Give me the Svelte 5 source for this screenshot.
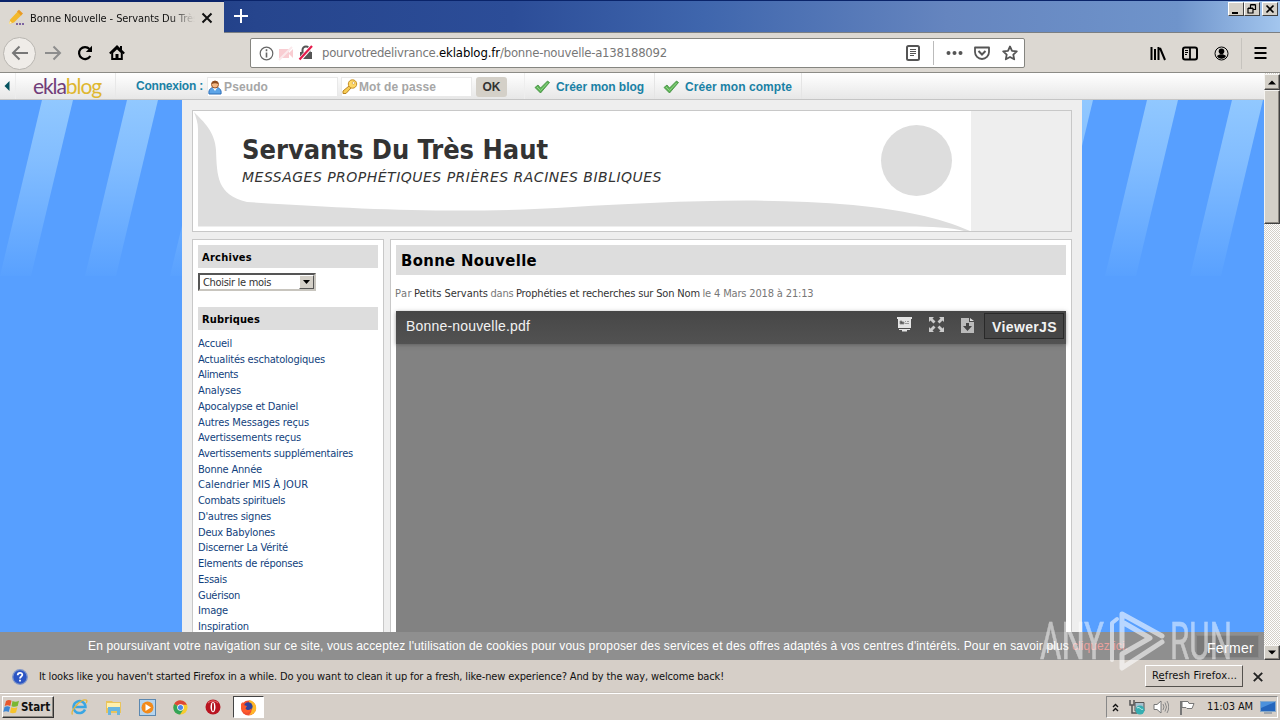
<script>
  // Spreads the letters of an inline element so that it fills the given width.
  function fit(node, width) {
    const natural = node.getBoundingClientRect().width;
    node.style.letterSpacing = `${(width - natural) / [...node.textContent].length}px`;
  }

  const rubriques = [
    ['Accueil', 34], ['Actualités eschatologiques', 127], ['Aliments', 40], ['Analyses', 43],
    ['Apocalypse et Daniel', 100], ['Autres Messages reçus', 111], ['Avertissements reçus', 103],
    ['Avertissements supplémentaires', 155], ['Bonne Année', 64], ['Calendrier MIS À JOUR', 110],
    ['Combats spirituels', 87], ["D'autres signes", 73], ['Deux Babylones', 77],
    ['Discerner La Vérité', 90], ['Elements de réponses', 105], ['Essais', 29],
    ['Guérison', 42], ['Image', 30], ['Inspiration', 51]
  ];
  const leftStripes = [42, 127, 212];
  const rightStripes = [1062, 1147, 1232];
  const stripe = (x) => `${x},0 ${x + 31},0 ${x - 11},176 ${x - 42},176`;
</script>

{#snippet check()}
  <svg class="check" width="16" height="14" viewBox="0 0 16 14"><path d="M1 7.5 4 5l2.500 3L13.500 1 15.500 2.500 6.500 13z" fill="#5fb457" stroke="#3d8c3c" stroke-width=".8" /><path d="M3 7l3.500 3.500L13.500 3" fill="none" stroke="#8fd587" /></svg>
{/snippet}

<div class="screen">
  <header class="tabs">
    <div class="tab">
      <svg width="17" height="17" viewBox="0 0 17 17"><path d="M1 15 2.200 10.500 10 2.200 13.800 5.800 6 13.500z" fill="#f3b92c" /><path d="M9 2.500 11 .8 15 4.500 13 6.500z" fill="#e89a25" /><path d="M1 15l1-3 2 2z" fill="#fff1b8" /><path d="M8 15h2m1 0h2m1 0h2" stroke="#5d3e91" stroke-width="1.700" /></svg>
      <div class="tabtitle"><span use:fit={168}>Bonne Nouvelle - Servants Du Très</span></div>
      <svg width="12" height="12" viewBox="0 0 12 12"><path d="M1.500 1.500l9 9m0-9l-9 9" stroke="#111" stroke-width="2" /></svg>
    </div>
    <svg class="plus" width="16" height="16" viewBox="0 0 16 16"><path d="M8 1v14M1 8h14" stroke="#fff" stroke-width="2" /></svg>
    <div class="winbtns">
      <b><svg width="14" height="12" viewBox="0 0 14 12"><path d="M3 10h6" stroke="#000" stroke-width="2" /></svg></b>
      <b><svg width="14" height="12" viewBox="0 0 14 12"><path d="M5.500 4.500V2h5v4.500H8M3 5.500h5V10H3zM3 5h5M5.500 1.500h5" fill="none" stroke="#000" stroke-width="1.200" /></svg></b>
      <b class="close"><svg width="14" height="12" viewBox="0 0 14 12"><path d="M3.500 2.500l7 7m0-7l-7 7" stroke="#000" stroke-width="1.700" /></svg></b>
    </div>
  </header>

  <div class="toolbar">
    <div class="back"><svg width="18" height="16" viewBox="0 0 18 16"><path d="M17 8H2m6.500-6.500L2 8l6.500 6.500" fill="none" stroke="#777" stroke-width="2" /></svg></div>
    <svg class="fwd" width="17" height="16" viewBox="0 0 17 16"><path d="M0 8h15M8.500 1.500L15 8l-6.500 6.500" fill="none" stroke="#8d8d8d" stroke-width="2" /></svg>
    <svg class="reload" width="16" height="16" viewBox="0 0 16 16"><path d="M13.300 11A6 6 0 1 1 12.500 4" fill="none" stroke="#000" stroke-width="2.200" /><path d="M15 .8V7H8.800z" /></svg>
    <svg class="home" width="16" height="16" viewBox="0 0 16 16"><path d="M.8 8.500L8 1.500l7.200 7" fill="none" stroke="#000" stroke-width="2" /><path d="M3.200 7.500V14h9.600V7.500L8 3z" fill="none" stroke="#000" stroke-width="2" /><path d="M6.500 9h3v5.500h-3zM11 1h2v4h-2z" /></svg>
    <div class="url">
      <svg width="15" height="15" viewBox="0 0 15 15"><circle cx="7.500" cy="7.500" r="6.300" fill="none" stroke="#666" stroke-width="1.200" /><path d="M7.500 3.300v1.900M7.500 6.500v5" stroke="#666" stroke-width="1.600" /></svg>
      <svg class="blocked" width="16" height="15" viewBox="0 0 16 15"><path d="M1 3h10v9H1zM11 7l4-4v9l-4-4z" fill="#f9cdd2" /><path d="M1 14L14 1" stroke="#fbe9eb" stroke-width="2" /></svg>
      <svg class="lock" width="16" height="16" viewBox="0 0 16 16"><path d="M2 7h12v7H2z" fill="#555" /><path d="M4.500 7V5a3.500 3.500 0 0 1 7 0v2" fill="none" stroke="#555" stroke-width="2" /><path d="M2 14.500L14 1" stroke="#fff" stroke-width="4" /><path d="M1.500 14.500L14 1" stroke="#e51b4b" stroke-width="2.200" /></svg>
      <span class="addr"><span use:fit={117}>pourvotredelivrance.</span><span class="domain" use:fit={61}>eklablog.fr</span><span use:fit={167}>/bonne-nouvelle-a138188092</span></span>
      <svg class="reader" width="14" height="16" viewBox="0 0 14 16"><rect x="1" y="1" width="12" height="14" rx="1.500" fill="none" stroke="#555" stroke-width="2" /><path d="M4 4.500h6M4 6.500h6M4 8.500h6M4 10.500h4" stroke="#555" /></svg>
      <i class="usep"></i>
      <svg class="dots" width="17" height="6" viewBox="0 0 17 6"><g fill="#555"><circle cx="2.500" cy="3" r="2" /><circle cx="8.500" cy="3" r="2" /><circle cx="14.500" cy="3" r="2" /></g></svg>
      <svg class="pocket" width="16" height="15" viewBox="0 0 16 15"><path d="M1 1.500h14V6A7 7 0 0 1 1 6z" fill="none" stroke="#555" stroke-width="1.800" stroke-linejoin="round" /><path d="M4.500 5L8 8.500 11.500 5" fill="none" stroke="#555" stroke-width="2" /></svg>
      <svg width="16" height="16" viewBox="0 0 16 16"><path d="M8 1.500l2 4.300 4.800.6-3.500 3.200.9 4.700L8 12l-4.200 2.300.9-4.700L1.200 6.400 6 5.800z" fill="none" stroke="#555" stroke-width="1.800" stroke-linejoin="round" /></svg>
    </div>
    <div class="tools">
      <svg width="16" height="15" viewBox="0 0 16 15"><path d="M1.500 1v13M5 3v11M8.500 1v13M10 2l5 12" fill="none" stroke="#000" stroke-width="2" /></svg>
      <svg width="16" height="15" viewBox="0 0 16 15"><rect x="1" y="1.500" width="14" height="12" rx="2" fill="none" stroke="#000" stroke-width="2" /><path d="M8 1v13" stroke="#000" stroke-width="1.800" /><path d="M3 4.500h3M3 6.500h3M3 8.500h2" stroke="#000" /></svg>
      <svg width="15" height="15" viewBox="0 0 15 15"><circle cx="7.500" cy="7.500" r="6.500" fill="none" stroke="#000" /><circle cx="7.500" cy="5.300" r="2.800" /><path d="M3 10c2.500-2.500 6.500-2.500 9 0-1.200 3.500-7.800 3.500-9 0z" /></svg>
      <i></i>
      <svg width="13" height="14" viewBox="0 0 13 14"><path d="M.5 2h12M.5 7h12M.5 12h12" stroke="#000" stroke-width="2" /></svg>
    </div>
  </div>

  <section class="view">
    <div class="content">
      <nav class="ekla">
        <div class="arrow"><svg width="6" height="10" viewBox="0 0 6 10"><path d="M5.500 0v10L.5 5z" fill="#05535f" /></svg></div>
        <div class="logo"><span use:fit={68}>ekla<em>blog</em></span></div>
        <div class="login">
          <b class="blue" use:fit={67}>Connexion :</b>
          <div class="field user">
            <svg width="14" height="15" viewBox="0 0 14 15"><path d="M1 14c-1-5 3-7 6-7s7 2 6 7z" fill="#5da5e8" stroke="#2c6cb6" /><path d="M5 8l2 3 2-3z" fill="#fff" /><circle cx="7" cy="4.500" r="3.500" fill="#f4b884" stroke="#9b572a" /><path d="M3.500 4C4 0 10 0 10.500 4 8 3 6 3 3.500 4z" fill="#8b4a1d" /></svg>
            <b use:fit={44}>Pseudo</b>
          </div>
          <div class="field pass">
            <svg width="16" height="16" viewBox="0 0 16 16"><path d="M7 7l2 2-5 5.500H1V12z" fill="#f7cd55" stroke="#bb8421" /><circle cx="10.500" cy="5" r="4.200" fill="#ffd866" stroke="#c68f25" /><circle cx="11.500" cy="4" r="1.300" fill="#fff" stroke="#bb8421" stroke-width=".5" /></svg>
            <b use:fit={77}>Mot de passe</b>
          </div>
          <b class="ok">OK</b>
        </div>
        <div class="create">{@render check()}<b class="blue" use:fit={88}>Créer mon blog</b></div>
        <div class="create second">{@render check()}<b class="blue" use:fit={107}>Créer mon compte</b></div>
      </nav>

      <div class="page">
        <svg class="side" width="182" height="560" viewBox="0 0 182 560">
          <defs><linearGradient id="fade" x1="0" y1="0" x2="0" y2="176" gradientUnits="userSpaceOnUse"><stop offset="0" stop-color="#91c8ff" /><stop offset=".35" stop-color="#82bdff" /><stop offset="1" stop-color="#59a1ff" /></linearGradient></defs>
          {#each leftStripes as x}<polygon points={stripe(x)} fill="url(#fade)" />{/each}
        </svg>
        <div class="center">
          <div class="banner">
            <svg class="wave" width="778" height="120" viewBox="0 0 778 120">
              <rect width="778" height="120" fill="#fff" />
              <path d="M1 1C11 11 22 21 23 39C24 65 24 84 54 91C180 99 270 103 380 96C460 92 560 85 660 94C710 99 745 106 777 120H771C757 116 740 116 715 115.500H5V18C5 12 3 6 1 1z" fill="#ddd" />
              <circle cx="723.500" cy="49.500" r="35.500" fill="#ddd" />
            </svg>
            <div class="words">
              <h1><span use:fit={306}>Servants Du Très Haut</span></h1>
              <p><span use:fit={420}>MESSAGES PROPHÉTIQUES PRIÈRES RACINES BIBLIQUES</span></p>
            </div>
          </div>
          <div class="cols">
            <aside>
              <h3><span use:fit={50}>Archives</span></h3>
              <div class="select"><span use:fit={68}>Choisir le mois</span><i><svg width="7" height="4" viewBox="0 0 7 4"><path d="M0 0h7L3.500 4z" /></svg></i></div>
              <h3><span use:fit={58}>Rubriques</span></h3>
              <ul>{#each rubriques as [name, w]}<li><span use:fit={w}>{name}</span></li>{/each}</ul>
            </aside>
            <article>
              <h2><span use:fit={136}>Bonne Nouvelle</span></h2>
              <p class="meta"><span use:fit={17}>Par</span><span class="dk par" use:fit={74}>Petits Servants</span><span class="gap" use:fit={23}>dans</span><span class="dk gap" use:fit={184}>Prophéties et recherches sur Son Nom</span><span class="gap" use:fit={111}>le 4 Mars 2018 à 21:13</span></p>
              <div class="viewer">
                <div class="vbar">
                  <span class="file" use:fit={124}>Bonne-nouvelle.pdf</span>
                  <svg width="15" height="15" viewBox="0 0 15 15"><path d="M0 0h15v2h-1v9H1V2H0zM2 12h11v1H2zM5 13h5v1.500H5z" fill="#e4e4e4" /><path d="M3 4v3h4V5H5V4zM8 4.500h1m1 0h2M8 6.500h4" fill="#555" stroke="#888" stroke-width=".8" /></svg>
                  <svg width="15" height="15" viewBox="0 0 15 15"><path d="M0 0h5L3.500 1.500l3 3-2 2-3-3L0 5zM15 0v5l-1.500-1.500-3 3-2-2 3-3L10 0zM0 15v-5l1.500 1.500 3-3 2 2-3 3L5 15zM15 15h-5l1.500-1.500-3-3 2-2 3 3L15 10z" fill="#ccc" /></svg>
                  <svg class="dl" width="13" height="15" viewBox="0 0 13 15"><path d="M0 0h8v4h5v11H0z" fill="#bbb" /><path d="M9 0l4 3H9z" fill="#ddd" /><path d="M5 5h3v3h3l-4.500 5L2 8h3z" fill="#444" /></svg>
                  <b class="vjs"><span use:fit={65}>ViewerJS</span></b>
                </div>
              </div>
            </article>
          </div>
        </div>
        <svg class="side" width="182" height="560" viewBox="1082 0 182 560">
          {#each rightStripes as x}<polygon points={stripe(x)} fill="url(#fade)" />{/each}
        </svg>
      </div>

      <div class="cookie">
        <span use:fit={981}>En poursuivant votre navigation sur ce site, vous acceptez l'utilisation de cookies pour vous proposer des services et des offres adaptés à vos centres d'intérêts. Pour en savoir plus</span>
        <span class="lien" use:fit={56}>cliquez ici.</span>
        <div class="fermer"><span use:fit={47}>Fermer</span></div>
      </div>
    </div>
    <div class="scroll">
      <b><svg width="8" height="5" viewBox="0 0 8 5"><path d="M0 4.500h8L4 .5z" /></svg></b>
      <i></i>
      <b class="down"><svg width="8" height="5" viewBox="0 0 8 5"><path d="M0 .5h8L4 4.500z" /></svg></b>
    </div>
  </section>

  <div class="notice">
    <svg width="16" height="16" viewBox="0 0 16 16"><circle cx="8" cy="8" r="7.300" fill="#2c55c4" stroke="#8097c9" stroke-width="1.300" /><path d="M5.700 6.300C5.700 3 10.500 3.200 10.300 6 10.200 7.500 8 7.500 8 9.500M8 10.700v1.800" fill="none" stroke="#fff" stroke-width="1.800" /></svg>
    <span use:fit={685}>It looks like you haven't started Firefox in a while. Do you want to clean it up for a fresh, like-new experience? And by the way, welcome back!</span>
    <div class="refresh"><span use:fit={85}>R<u>e</u>fresh Firefox...</span></div>
    <svg class="nx" width="10" height="10" viewBox="0 0 10 10"><path d="M.8.8l8.400 8.400m0-8.400L.8 9.200" stroke="#222" stroke-width="1.900" /></svg>
  </div>

  <footer>
    <div class="start">
      <svg width="17" height="16" viewBox="0 0 17 16"><path d="M3 2c2-1.500 4-1.200 5.500-.3L7.300 7C5.500 6 3.500 6 1.700 7z" fill="#e8582d" /><path d="M9.500 2c2 .9 4 .9 6.500-.2L14.700 7c-2 1-4 1-6.200.2z" fill="#7ab733" /><path d="M1.500 8c1.800-1 3.800-1 5.600 0L5.700 13C4 12 2 12 .3 13z" fill="#3d86d4" /><path d="M8.200 8.200c2 1 4 1 6.200 0L13 13.500c-2.200 1-4.200 1-6 0z" fill="#f6c32c" /></svg>
      <b use:fit={29}>Start</b>
    </div>
    <div class="quick">
      <svg width="17" height="17" viewBox="0 0 17 17"><path d="M14 10.500A6 6 0 1 1 14.500 8H4" fill="none" stroke="#3aa6e3" stroke-width="2.500" /><path d="M1.500 15.500C-1 12 10-1 15.500 1.200c1 .8 0 2.300-.5 3" fill="none" stroke="#e5b63c" stroke-width="1.300" /></svg>
      <svg width="17" height="17" viewBox="0 0 17 17"><path d="M1 2h6l1 1h8v11H1z" fill="#e9c45c" /><path d="M2 4h13v5H2z" fill="#fff0ac" /><path d="M3 8h12v8h-3v-4H6v4H3z" fill="#69b6df" /></svg>
      <svg width="17" height="17" viewBox="0 0 17 17"><rect x=".5" y=".5" width="16" height="16" fill="#b5d4ee" stroke="#5c88b0" /><circle cx="8.500" cy="8.500" r="6" fill="#f28a1b" /><path d="M6.500 5l5.500 3.500-5.500 3.500z" fill="#fff" /></svg>
      <svg width="15" height="15" viewBox="0 0 16 16"><circle cx="8" cy="8" r="7.500" fill="#f7cc2e" /><path d="M8 8L1.300 4.300A7.500 7.500 0 0 1 14.800 5H8z" fill="#dd4637" /><path d="M8 8L1.300 4.300A7.500 7.500 0 0 0 7.500 15.500L11 10z" fill="#33a457" /><circle cx="8" cy="8" r="3.500" fill="#fff" /><circle cx="8" cy="8" r="2.700" fill="#4a87e8" /></svg>
      <svg width="16" height="16" viewBox="0 0 16 16"><circle cx="8" cy="8" r="7.500" fill="#b91420" /><path d="M3 4a7 7 0 0 1 10 0" stroke="#e96d6d" fill="none" /><ellipse cx="8" cy="8" rx="2.500" ry="5.300" fill="#fff" /><ellipse cx="8" cy="8" rx="1" ry="4.400" fill="#ae1720" /></svg>
    </div>
    <div class="active"><svg width="17" height="17" viewBox="0 0 17 17"><circle cx="8.500" cy="9" r="7.500" fill="#f04e30" /><path d="M9 1c5 1 8 5 7 10-1 3-4 5-7 5 3-3 4-7 0-11z" fill="#ffb829" /><circle cx="8.300" cy="7.500" r="4.300" fill="#31449c" /><path d="M1 5l1.500-2 1 3 3.500 1-1.500 2.500c2 2.500 5 1.500 6-.5 0 4-5 6-8 4-2-1-2.500-5-2.500-8z" fill="#ff5b2b" /></svg></div>
    <div class="tray">
      <svg width="7" height="9" viewBox="0 0 7 9"><path d="M1 4l2.500-2.500L6 4M1 8l2.500-2.500L6 8" fill="none" stroke="#111" stroke-width="1.400" /></svg>
      <svg width="16" height="16" viewBox="0 0 16 16"><path d="M6 3.500h9v8.500H6z" fill="#aac2cf" stroke="#555" /><path d="M1 1v5h4V1M3 6v8h5" fill="none" stroke="#555" stroke-width="1.500" /><circle cx="11" cy="11" r="4.500" fill="#36aeb1" /><path d="M8 9c3-2 4 3 6 1" fill="none" stroke="#c6f1ed" /></svg>
      <svg width="16" height="14" viewBox="0 0 16 14"><path d="M1 4.500h3L8 1v12L4 9.500H1z" fill="#fff" stroke="#777" /><path d="M10 4q2 3 0 6M12 2.500q3 4.500 0 9M14 1q3.500 6 0 12" fill="none" stroke="#888" /></svg>
      <svg width="16" height="15" viewBox="0 0 16 15"><path d="M2 1v14" stroke="#777" stroke-width="2" /><path d="M3 1.500h6l1 2h5l-2 5H8l-1-1H3z" fill="#fff" stroke="#777" /></svg>
      <span class="clock" use:fit={46}>11:03 AM</span>
      <svg width="16" height="13" viewBox="0 0 16 13"><rect x=".5" y=".5" width="15" height="10" fill="#2566bd" stroke="#86a8c9" /><path d="M1 1h14L1 7z" fill="#4c91dc" /><path d="M4 12h8" stroke="#6a7e93" /></svg>
    </div>
  </footer>

  <svg class="mark" width="200" height="66" viewBox="0 0 200 66">
    <g fill="#fff" stroke="#fff" stroke-width=".6" opacity=".5">
      <text x="4" y="51" textLength="64" lengthAdjust="spacingAndGlyphs">ANY</text>
      <text x="134" y="51" textLength="62" lengthAdjust="spacingAndGlyphs">RUN</text>
    </g>
    <g fill="none" stroke="#fff" opacity=".58" stroke-width="5" stroke-linejoin="round" stroke-linecap="round"><path d="M86 38V6L126 28M126 34L86 60V46L114 30L88 15" /><path d="M76 52V15L81 11" stroke-width="4" /></g>
  </svg>
</div>

<style>
  :global(body) { margin: 0; overflow: hidden; }
  .screen { position: relative; width: 1280px; height: 720px; overflow: hidden; display: flex; flex-direction: column; background: #d8d4cf; font: 11px/14px "DejaVu Sans Condensed", "DejaVu Sans", sans-serif; font-stretch: condensed; color: #111; }
  .screen :global(*) { box-sizing: border-box; }
  svg { display: block; flex: none; }
  span, b { white-space: pre; display: inline-block; flex: none; }
  h1, h2, h3, p, ul { margin: 0; padding: 0; }

  .tabs { height: 33px; flex: none; display: flex; align-items: flex-start; background: linear-gradient(90deg, #0d2a73 0, #26458d 20%, #2c4d98 40%, #3f66ad 55%, #6585bf 74%, #6f94cb 92%, #a3c6ee 100%); border-bottom: 1px solid #7b7f83; box-shadow: inset 0 1px #0a246a; }
  .tab { width: 224px; height: 33px; margin-top: 1px; padding-left: 8px; background: #dcd8d2; display: flex; align-items: center; padding-bottom: 1px; border-top: 1px solid #0a246a; }
  .tabtitle { width: 165px; height: 16px; margin: 0 6px 0 5px; overflow: hidden; line-height: 17px; mask-image: linear-gradient(90deg, #000 85%, transparent); }
  .plus { margin: 8px auto 0 9px; }
  .winbtns { display: flex; margin: 2px 2px 0 0; }
  .winbtns b { width: 16px; height: 14px; background: #d4d0c8; border: 1px solid; border-color: #fff #404040 #404040 #fff; }
  .winbtns .close { margin-left: 2px; }

  .toolbar { height: 40px; flex: none; display: flex; align-items: center; background: #dcd8d2; border-bottom: 1px solid #8c8b86; padding-top: 1px; }
  .back { width: 33px; height: 33px; margin-left: 3px; border-radius: 50%; background: #efece8; border: 1px solid #b9b6b1; display: grid; place-items: center; }
  .fwd { margin-left: 9px; } .reload { margin-left: 15px; } .home { margin-left: 16px; }
  .url { width: 775px; height: 30px; margin-left: 125px; background: #fff; border: 1px solid #858580; border-radius: 2px; padding-left: 8px; display: flex; align-items: center; }
  .blocked { margin-left: 4px; } .lock { margin-left: 4px; }
  .addr { width: 345px; margin-left: 8px; font-size: 13px; color: #777; display: flex; }
  .domain { color: #000; }
  .reader { margin-left: 239px; }
  .usep { width: 1px; height: 24px; background: #bbb; margin: 0 12px 0 13px; }
  .pocket { margin: 0 12px 0 11px; }
  .tools { display: flex; align-items: center; margin-left: 125px; gap: 16px; }
  .tools i { width: 1px; height: 31px; background: #c6c3be; margin: 0 -4px 0 -4px; }

  .view { height: 587px; flex: none; display: flex; overflow: hidden; }
  .content { position: relative; width: 1264px; height: 587px; overflow: hidden; }
  .ekla { height: 27px; display: flex; background: linear-gradient(#fff, #e7e7e7); border-bottom: 1px solid #c5c5c5; font: bold 12px/14px "Liberation Sans", Arial, sans-serif; font-stretch: normal; }
  .arrow { width: 16px; padding: 8px 0 0 4px; border-right: 1px solid #ededed; }
  .logo { width: 100px; padding-left: 17px; border-right: 1px solid #e8e8e8; font: 21px/26px Lato, sans-serif; color: #713c79; }
  .logo em { font-style: normal; color: #dfb72f; }
  .login { width: 409px; display: flex; align-items: flex-start; padding: 4px 0 0 20px; border-right: 1px solid #eee; }
  .login .blue { margin-top: 2px; }
  .blue { color: #1a81a5; }
  .field { height: 20px; display: flex; align-items: center; gap: 2px; background: #fff; border: 1px solid #e9e9e9; color: #a6a6a6; }
  .user { width: 131px; margin-left: 4px; } .pass { width: 131px; margin-left: 3px; padding-left: 0; gap: 1px; }
  .ok { width: 31px; height: 20px; margin-left: 4px; background: #d4d0c8; border-radius: 3px; color: #333; text-align: center; line-height: 21px; font-size: 12px; }
  .create { width: 130px; display: flex; align-items: center; gap: 6px; padding: 1px 0 0 9px; border-right: 1px solid #e5e5e5; }
  .second { width: 147px; padding-left: 8px; }

  .page { display: flex; height: 560px; }
  .side { background: #579fff; }
  .center { width: 900px; background: #eee; padding: 10px 10px 0; flex: none; }
  .banner { width: 880px; height: 122px; border: 1px solid #c8c8c8; display: grid; }
  .wave, .words { grid-area: 1 / 1; }
  .words { padding: 23px 0 0 49px; }
  h1 { font: bold 27px/32px "DejaVu Sans Condensed", "DejaVu Sans", sans-serif; font-stretch: condensed; color: #333; }
  .words p { font: oblique 14px/20px "DejaVu Sans", sans-serif; font-stretch: normal; color: #333; }
  .words h1 + p { margin-top: 1px; }
  .cols { display: flex; gap: 6px; padding-top: 7px; }
  aside { width: 192px; height: 440px; background: #fff; border: 1px solid #c8c8c8; padding: 5px; }
  h3 { width: 180px; height: 23px; background: #ddd; font-size: 11px; line-height: 26px; padding-left: 4px; color: #000; }
  .select { width: 118px; height: 18px; margin: 5px 0 16px; display: flex; justify-content: space-between; border: 2px solid; border-color: #555 #c8c5be #c8c5be #555; padding-left: 3px; line-height: 16px; color: #333; }
  .select i { width: 15px; height: 14px; background: #d4d0c8; border: 1px solid; border-color: #fff #555 #555 #fff; display: grid; place-items: center; }
  ul { list-style: none; padding-top: 6px; }
  li { height: 15.730px; line-height: 16px; color: #123f7d; }
  li span { display: block; width: max-content; }
  article { width: 682px; height: 440px; background: #fff; border: 1px solid #c8c8c8; padding: 5px; }
  h2 { height: 30px; background: #ddd; font-size: 16.500px; line-height: 31px; padding-left: 5px; color: #000; }
  .meta { display: flex; height: 36px; padding-top: 12px; margin-left: -1px; color: #777; }
  .dk { color: #333; } .gap { margin-left: 2.500px; } .par { margin-left: 2px; }
  .viewer { height: 360px; background: #828282; }
  .vbar { height: 33px; background: linear-gradient(#474747, #525252); box-shadow: 0 1px 4px #4448; display: flex; padding-left: 10px; font: 14px/30px "Liberation Sans", Arial, sans-serif; font-stretch: normal; color: #f2f2f2; }
  .vbar svg { margin: 6px 17px 0 0; }
  .file { margin-right: 367px; }
  .vbar .dl { margin: 7px 10px 0 0; }
  .vjs { width: 80px; height: 26px; margin-top: 2px; padding-left: 7px; border: 1px solid #292929; background: #454545; line-height: 26px; }

  .cookie { position: absolute; left: 0; bottom: 0; width: 1264px; height: 28px; background: #8f8f8f; color: #fff; display: flex; padding-left: 88px; font: 12px/28px "Liberation Sans", Arial, sans-serif; font-stretch: normal; }
  .lien { color: #e9a09d; margin-left: 3px; }
  .fermer { width: 63px; height: 23px; margin: 3px 0 0 68px; padding-left: 10px; background: #797979; border: 1px solid #888; font-size: 14px; line-height: 24px; }
  .scroll { width: 16px; display: flex; flex-direction: column; background: repeating-conic-gradient(#d4d0c8 0 25%, #fff 0 50%) 0 0 / 2px 2px; }
  .scroll b, .scroll i { background: #d4d0c8; border: 1px solid; border-color: #f5f4f1 #404040 #404040 #f5f4f1; box-shadow: inset -1px -1px #8b8780; }
  .scroll b { height: 16px; margin-top: 1px; display: grid; place-items: center; }
  .scroll i { height: 134px; }
  .scroll .down { margin-top: auto; height: 15px; }

  .notice { height: 33px; flex: none; background: #d6cfc8; display: flex; align-items: center; padding: 2px 0 0 12px; border-bottom: 1px solid #c9c3bc; }
  .notice > span { margin-left: 11px; }
  .refresh { width: 98px; height: 22px; margin: 0 10px 2px auto; padding-left: 6px; border: 1px solid; border-color: #fff #55524e #55524e #fff; line-height: 20px; }
  .nx { margin-right: 17px; }
  footer { height: 27px; flex: none; border-top: 1px solid #fff; background: #d6cfc8; display: flex; align-items: center; padding: 0 2px; }
  .start { width: 52px; height: 22px; border: 1px solid; border-color: #fff #333 #333 #fff; display: flex; align-items: center; gap: 1px; padding-left: 0; box-shadow: inset -1px -1px #8b8780; font-size: 11.500px; }
  .quick { display: flex; align-items: center; gap: 17px; margin-left: 17px; }
  .active { width: 31px; height: 22px; margin-left: 12px; background: #fff; border: 1px solid; border-color: #444 #fff #fff #444; display: grid; place-items: center; }
  .tray { width: 172px; height: 22px; margin-left: auto; border: 1px solid; border-color: #888 #fff #fff #888; display: flex; align-items: center; padding-left: 5px; gap: 10px; }
  .tray > :nth-child(2) { margin-right: -2px; }
  .tray > :nth-child(4) { margin-right: 2px; }
  .tray > :nth-child(5) { margin-right: -3px; }
  .mark { position: absolute; left: 1036px; top: 608px; font: 400 52px Roboto, sans-serif; font-stretch: normal; }
</style>
